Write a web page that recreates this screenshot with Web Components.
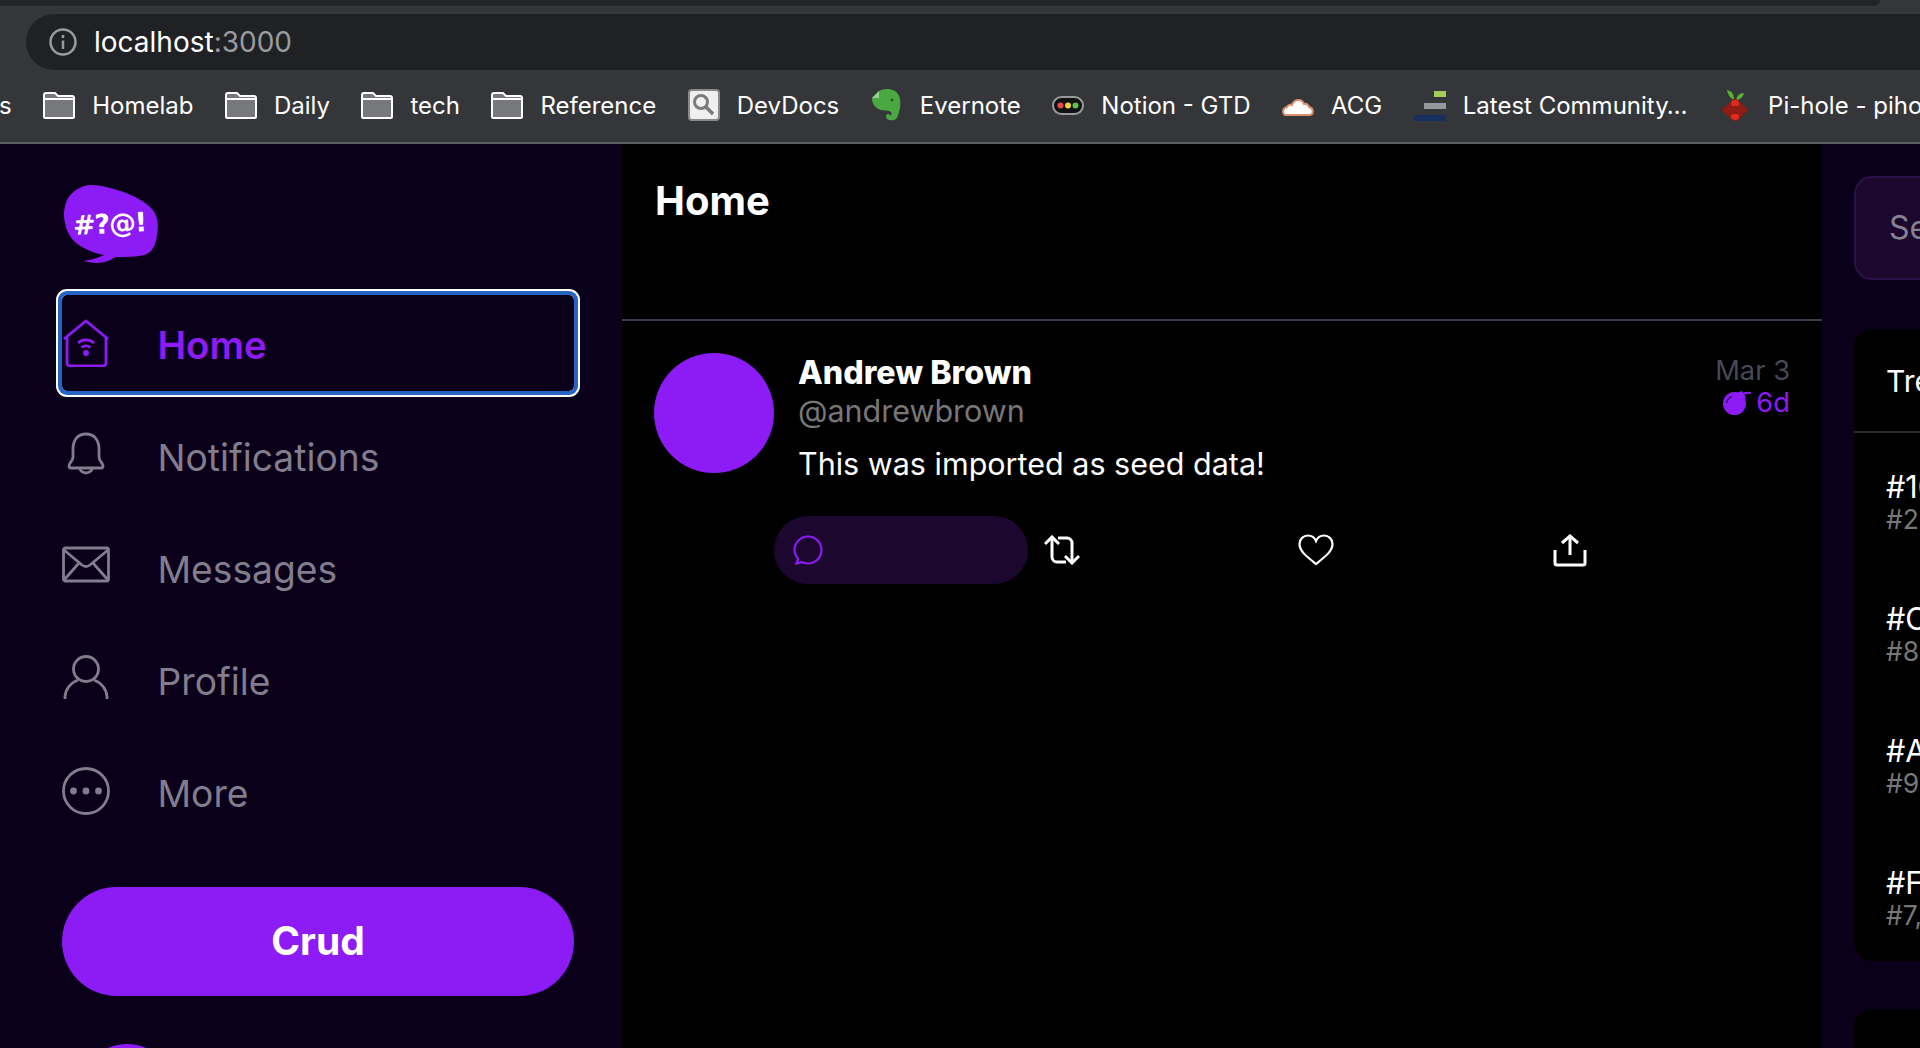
<!doctype html>
<html>
<head>
<meta charset="utf-8">
<title>localhost:3000</title>
<style>
html,body{margin:0;height:100%;background:#000;overflow:hidden}
body{font-family:Inter,"Liberation Sans",sans-serif}
</style>
</head>
<body>
<app-page></app-page>
<script>
const ICONS={
home:`<path d="M2 20 24 2 46 20"/><path d="M5 18V44a3 3 0 0 0 3 3H41a3 3 0 0 0 3-3V18"/><path d="M16 24a12 12 0 0 1 16 0"/><path d="M19.5 28.5a7 7 0 0 1 9 0"/><circle cx="24" cy="34" r="1.6" fill="currentColor"/>`,
bell:`<path d="M24 3C15 3 11 10 11 18V26C11 30 7 32 7 35Q7 37 9 37H39Q41 37 41 35C41 32 37 30 37 26V18C37 10 33 3 24 3Z"/><path d="M18 37a6 5 0 0 0 12 0"/>`,
mail:`<rect x="1.5" y="5" width="45" height="33" rx="2"/><path d="M2 7 20 22Q24 25 28 22L46 7"/><path d="M2 37 17 20"/><path d="M46 37 31 20"/>`,
user:`<circle cx="24" cy="14" r="12.5"/><path d="M3 44V42A21 19 0 0 1 16 25"/><path d="M45 44V42A21 19 0 0 0 32 25"/>`,
more:`<circle cx="24" cy="24" r="22.5"/><circle cx="11.5" cy="24" r="2" fill="currentColor"/><circle cx="24" cy="24" r="2" fill="currentColor"/><circle cx="36.5" cy="24" r="2" fill="currentColor"/>`
};

class BrowserChrome extends HTMLElement{
constructor(){
  super();
  const folder=`<svg width="32" height="32" viewBox="0 0 32 32"><path d="M1 6a2 2 0 0 1 2-2h9l3 3h14a2 2 0 0 1 2 2v19a1 1 0 0 1-1 1H2a1 1 0 0 1-1-1Z" fill="#77787b" stroke="#fff" stroke-width="2"/><path d="M2 10H30" stroke="#fff" stroke-width="2"/></svg>`;
  const marks=[
    ['Homelab',folder],['Daily',folder],['tech',folder],['Reference',folder],
    ['DevDocs',`<svg width="32" height="32" viewBox="0 0 32 32"><rect x="1" y="1" width="30" height="30" rx="3" fill="#efefef" stroke="#8a8a8a" stroke-width="2"/><circle cx="13" cy="13" r="6.500" fill="none" stroke="#7a7a7a" stroke-width="3"/><path d="M18 18 25 25" stroke="#7a7a7a" stroke-width="3.500"/></svg>`],
    ['Evernote',`<svg width="32" height="32" viewBox="0 0 32 32"><path d="M8 2C13-1 23-1 27 5 30 10 30 17 28 23 27 27 26 30 23 31 19 32 15 31 15 27 15 25 18 24 19 26 20 27 21 25 20 23 18 21 14 22 10 21 4 19 1 15 1 9Z" fill="#4aa842"/><path d="M1 9 8 2V9Z" fill="#93d18c"/><circle cx="21" cy="11" r="1.300" fill="#234f20"/></svg>`],
    ['Notion - GTD',`<svg width="32" height="32" viewBox="0 0 32 32"><rect x="1" y="8" width="30" height="17" rx="8.500" fill="#111" stroke="#9a9a9a" stroke-width="2"/><circle cx="8.500" cy="16.500" r="3" fill="#e5484d"/><circle cx="16" cy="16.500" r="3" fill="#f2d23c"/><circle cx="23.500" cy="16.500" r="3" fill="#5cc04c"/></svg>`],
    ['ACG',`<svg width="32" height="32" viewBox="0 0 32 32"><path d="M4 26C0 26 0 19 5 18 6 16 9 15 10 16 12 10 20 9 22 15 25 14 27 17 27 18 32 19 32 26 27 26Z" fill="#fff" stroke="#d9906a" stroke-width="2"/></svg>`],
    ['Latest Community…',`<svg width="32" height="32" viewBox="0 0 32 32"><rect x="20" y="2" width="12" height="6" fill="#a3cc5a"/><rect x="10" y="14" width="22" height="6" fill="#969798"/><rect y="26" width="32" height="6" fill="#15305e"/></svg>`],
    ['Pi-hole - pihole',`<svg width="32" height="32" viewBox="0 0 32 32"><path d="M15 11C11 9 9 6 8 1 13 2 15 5 15 11Z" fill="#58b030"/><path d="M17 11C18 7 20 4 25 4 24 8 21 11 17 11Z" fill="#58b030"/><path d="M16 10 28 21 16 32 4 21Z" fill="#8f1d14" stroke="#8f1d14" stroke-width="2" stroke-linejoin="round"/><path d="M16 11C20 11 21 14 19 17H13C11 14 12 11 16 11ZM16 31C12 31 11 28 13 25H19C21 28 20 31 16 31Z" fill="#e02b20"/></svg>`]
  ];
  this.attachShadow({mode:'open'}).innerHTML=`<style>
:host{display:block;flex:none;height:144px;box-sizing:border-box;background:#35363a;border-bottom:2px solid #5c5d61;overflow:hidden;color:#fff;font-family:"Inter","Liberation Sans",sans-serif}
.strip{height:6px;width:1880px;background:#232428;border-bottom-right-radius:6px}
.url{margin:8px 0 0 26px;height:56px;width:1940px;background:#202124;border-radius:28px 0 0 28px;display:flex;align-items:center;gap:17px;padding-left:23px;box-sizing:border-box;font-size:28px}
.url span{color:#9a9b9e}
.marks{height:70px;display:flex;align-items:center;gap:31.5px;margin-left:-1px;white-space:nowrap;font-size:24px}
.mark{display:flex;align-items:center;gap:17px;flex:none}
.mark svg{display:block}
</style>
<div class="strip"></div>
<div class="url"><svg width="28" height="28" viewBox="0 0 28 28" fill="none" stroke="#9a9b9e" stroke-width="2.500"><circle cx="14" cy="14" r="12.500"/><path d="M14 12.500V21"/><path d="M14 7V10"/></svg><div>localhost<span>:3000</span></div></div>
<div class="marks"><div class="mark">s</div>${marks.map(([t,i])=>`<div class="mark">${i}<div>${t}</div></div>`).join('')}</div>`;
}
}
customElements.define('browser-chrome',BrowserChrome);

class NavItem extends HTMLElement{
constructor(){
  super();
  this.attachShadow({mode:'open'}).innerHTML=`<style>
:host{display:flex;align-items:center;gap:47.5px;height:96px;color:#827d8d;font-size:37.2px;border-radius:5px}
:host([active]){color:#8c1bf6;font-weight:600;font-size:38.4px;box-shadow:0 0 0 4px #2563c4,0 0 0 6px #fff}
svg{width:48px;height:48px;flex:none;fill:none;stroke:currentColor;stroke-width:2.8;display:block}
div{position:relative;top:2px}
</style><svg viewBox="0 0 48 48"></svg><div><slot></slot></div>`;
}
connectedCallback(){
  this.shadowRoot.querySelector('svg').innerHTML=ICONS[this.getAttribute('icon')]||'';
}
}
customElements.define('nav-item',NavItem);

class SideBar extends HTMLElement{
constructor(){
  super();
  this.attachShadow({mode:'open'}).innerHTML=`<style>
:host{display:flex;flex-direction:column;flex:none;width:622px;box-sizing:border-box;padding:41px 48px 0 62px;background:#0a0019;color:#fff;overflow:hidden}
.logo{display:block;width:96px;height:78px;flex:none;margin:0 0 32px 2px}
nav{display:flex;flex-direction:column;gap:16px}
button{flex:none;margin-top:48px;height:109px;border:0;border-radius:55px;background:#8c1bf6;color:#fff;font:700 39px Inter,"Liberation Sans",sans-serif;padding:0 0 2px}
.me{flex:none;width:96px;height:96px;border-radius:50%;background:#8c1bf6;margin:48px 0 0 17px}
</style>
<svg class="logo" viewBox="0 0 96 78"><path d="M27 0C17 0 7 7 3 15 0 22-1 30 1 38 3 50 10 58 20 63 28 67 34 69 40 70 34 73 27 75 20 76 26 78 36 79 44 76 47 75 49 73 52 72 62 72 72 72 80 70 88 68 92 60 93 50 95 40 94 30 87 23 78 14 64 8 53 5 44 2 36 0 27 0Z" fill="#8c1bf6"/><text x="9" y="48" fill="#fff" font-family="DejaVu Sans" font-weight="700" font-size="27" letter-spacing="-1.200" transform="rotate(-3 48 38)">#?@!</text></svg>
<nav><slot></slot></nav>
<button>Crud</button>
<div class="me"></div>`;
}
}
customElements.define('side-bar',SideBar);

class CrudAction extends HTMLElement{
constructor(){
  super();
  this.attachShadow({mode:'open'}).innerHTML=`<style>
:host{display:flex;align-items:center;flex:none;width:254px;height:68px;box-sizing:border-box;padding-left:19px;border-radius:34px;color:#fff}
:host([hover]){background:#1c082e;color:#8c1bf6}
::slotted(svg){display:block;fill:none;stroke:currentColor}
</style><slot></slot>`;
}
}
customElements.define('crud-action',CrudAction);

class CrudItem extends HTMLElement{
constructor(){
  super();
  this.attachShadow({mode:'open'}).innerHTML=`<style>
:host{display:block;padding:32px 32px 0;color:#fff;font-size:30.5px}
.top{display:flex}
.avatar{width:120px;height:120px;border-radius:50%;background:#8c1bf6;flex:none;margin-right:24px}
.body{flex:1;min-width:0}
.head{display:flex;justify-content:space-between}
.name{font-weight:800;font-size:32.2px;line-height:40px}
.handle{color:#777;line-height:36px}
.when{text-align:right;font-size:27.3px;line-height:32px;color:#454a5a;padding-top:2px}
.left{color:#8c1bf6;display:flex;gap:5px;align-items:center;justify-content:flex-end}
.left svg{display:block;flex:none}
.msg{margin-top:13px;line-height:44px}
.actions{display:flex;margin:30px 0 0 120px}
</style>
<div class="top"><div class="avatar"></div><div class="body">
<div class="head"><div><div class="name">Andrew Brown</div><div class="handle">@andrewbrown</div></div>
<div class="when"><div>Mar 3</div><div class="left"><svg width="28" height="24" viewBox="0 0 28 24"><circle cx="11.500" cy="12.500" r="11.500" fill="#8c1bf6"/><path d="M13 2 19 0 23 6 20 10Z" fill="#8c1bf6"/><path d="M20 3C22 1.500 25 1.500 28 2" fill="none" stroke="#8c1bf6" stroke-width="2"/><path d="M3.500 12C4 9 6 6.500 9 5.500" fill="none" stroke="#000" stroke-width="1"/></svg><div>6d</div></div></div></div>
<div class="msg">This was imported as seed data!</div>
</div></div>
<div class="actions"><slot></slot></div>`;
}
}
customElements.define('crud-item',CrudItem);

class MainFeed extends HTMLElement{
constructor(){
  super();
  this.attachShadow({mode:'open'}).innerHTML=`<style>
:host{display:block;flex:none;width:1200px;background:#000;color:#fff;overflow:hidden}
header{height:177px;box-sizing:border-box;border-bottom:2px solid #3c3d4a;padding:25px 33px;font-size:40px;font-weight:700;line-height:64px}
</style><header>Home</header><slot></slot>`;
}
}
customElements.define('main-feed',MainFeed);

class TrendRow extends HTMLElement{
constructor(){
  super();
  this.attachShadow({mode:'open'}).innerHTML=`<style>
:host{display:block;height:132px;box-sizing:border-box;padding-top:32px;white-space:nowrap;font-size:30.5px;line-height:40px;color:#fff}
div{color:#777;font-size:26.5px;line-height:28px;margin-top:-2px}
</style><slot></slot><div>${this.getAttribute('sub')||''}</div>`;
}
}
customElements.define('trend-row',TrendRow);

class RightRail extends HTMLElement{
constructor(){
  super();
  this.attachShadow({mode:'open'}).innerHTML=`<style>
:host{display:block;flex:1;min-width:0;background:#0a0019;color:#fff;overflow:hidden;padding:32px 0 0 32px}
.inner{width:500px}
.search{height:104px;box-sizing:border-box;border:2px solid #2a1145;border-radius:18px;background:#1c082e;color:#86818e;font-size:32px;line-height:100px;padding-left:33px}
.card{margin-top:49px;height:632px;box-sizing:border-box;background:#000;border-radius:18px 0 0 18px}
.title{height:104px;box-sizing:border-box;border-bottom:2px solid #26262f;padding:32px 0 0 32px;font-size:30px;line-height:40px}
.rows{padding-left:32px;margin-top:2px}
.next{margin-top:48px;height:120px;background:#000;border-radius:18px 0 0 18px}
</style><div class="inner">
<div class="search">Search</div>
<div class="card"><div class="title">Trends for you</div><div class="rows"><slot></slot></div></div>
<div class="next"></div>
</div>`;
}
}
customElements.define('right-rail',RightRail);

class AppPage extends HTMLElement{
constructor(){
  super();
  this.attachShadow({mode:'open'}).innerHTML=`<style>
:host{display:flex;flex-direction:column;height:1048px;overflow:hidden}
.app{flex:1;display:flex;min-height:0}
</style>
<browser-chrome></browser-chrome>
<div class="app">
<side-bar>
<nav-item icon="home" active>Home</nav-item>
<nav-item icon="bell">Notifications</nav-item>
<nav-item icon="mail">Messages</nav-item>
<nav-item icon="user">Profile</nav-item>
<nav-item icon="more">More</nav-item>
</side-bar>
<main-feed><crud-item>
<crud-action hover><svg width="30" height="30" viewBox="0 0 30 30" stroke-width="2.200"><path d="M3.500 28.500 5 24C3 21 1.500 18.500 1.500 15 1.500 7.500 7.500 1.500 15 1.500S28.500 7.500 28.500 15 22.500 28.500 15 28.500C12.500 28.500 10.500 27.500 8.500 27.200Z"/></svg></crud-action>
<crud-action><svg style="margin-left:-3px" width="36" height="30" viewBox="0 0 36 30" stroke-width="3"><path d="M1 9 8 2 15 9"/><path d="M8 2V22A5 5 0 0 0 13 27H22"/><path d="M21 21 28 28 35 21"/><path d="M28 28V8A5 5 0 0 0 23 3H14"/></svg></crud-action>
<crud-action><svg style="margin-left:-3px" width="36" height="32" viewBox="0 0 36 32" stroke-width="2.200"><path d="M18 30C8 22 1.500 17 1.500 10 1.500 5 5.500 1.500 10 1.500 13.500 1.500 16.500 3.500 18 7 19.500 3.500 22.500 1.500 26 1.500 30.500 1.500 34.500 5 34.500 10 34.500 17 28 22 18 30Z"/></svg></crud-action>
<crud-action><svg style="margin-left:-2px" width="34" height="33" viewBox="0 0 34 33" stroke-width="3"><path d="M17 21V2"/><path d="M9 9 17 2 25 9"/><path d="M2 16V29a2 2 0 0 0 2 2H30a2 2 0 0 0 2-2V16"/></svg></crud-action>
</crud-item></main-feed>
<right-rail>
<trend-row sub="#2,053 Cruds">#100DaysOfCloud</trend-row>
<trend-row sub="#8,253 Cruds">#CloudProject</trend-row>
<trend-row sub="#9,053 Cruds">#AWS</trend-row>
<trend-row sub="#7,753 Cruds">#FreeWillyReboot</trend-row>
</right-rail>
</div>`;
}
}
customElements.define('app-page',AppPage);
</script>
</body>
</html>
